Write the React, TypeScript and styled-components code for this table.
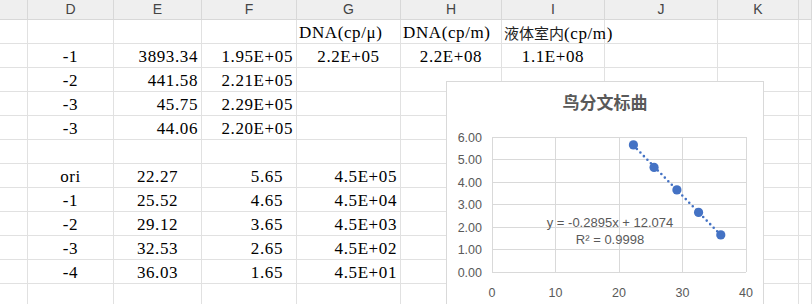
import React from "react";
import styled, { createGlobalStyle } from "styled-components";

type Align = "left" | "center" | "right";

interface CellData {
  text?: string;
  cjk?: string;
  align?: Align;
  pad?: number;
}

const GlobalStyle = createGlobalStyle`
  html, body {
    margin: 0;
    padding: 0;
    background: #fff;
  }
`;

const columns = ["", "D", "E", "F", "G", "H", "I", "J", "K", ""];
const widths = [28, 86, 88, 95, 104, 101, 103, 113, 81];

const c = (text: string, align: Align = "center", pad = 3): CellData => ({ text, align, pad });

// each row: cells for columns C..L (index 0..9)
const rows: CellData[][] = [
  [{}, {}, {}, {}, c("DNA(cp/μ)", "left", 2), c("DNA(cp/m)", "left", 2), { text: "(cp/m)", cjk: "液体室内", align: "left", pad: 2 }],
  [{}, c("-1"), c("3893.34", "right"), c("1.95E+05", "right"), c("2.2E+05"), c("2.2E+08"), c("1.1E+08")],
  [{}, c("-2"), c("441.58", "right"), c("2.21E+05", "right")],
  [{}, c("-3"), c("45.75", "right"), c("2.29E+05", "right")],
  [{}, c("-3"), c("44.06", "right"), c("2.20E+05", "right")],
  [],
  [{}, c("ori"), c("22.27"), c("5.65", "right", 13), c("4.5E+05", "right")],
  [{}, c("-1"), c("25.52"), c("4.65", "right", 13), c("4.5E+04", "right")],
  [{}, c("-2"), c("29.12"), c("3.65", "right", 13), c("4.5E+03", "right")],
  [{}, c("-3"), c("32.53"), c("2.65", "right", 13), c("4.5E+02", "right")],
  [{}, c("-4"), c("36.03"), c("1.65", "right", 13), c("4.5E+01", "right")],
  [],
];

const points = [
  [22.27, 5.65],
  [25.52, 4.65],
  [29.12, 3.65],
  [32.53, 2.65],
  [36.03, 1.65],
];

export default function App() {
  return (
    <Page>
      <GlobalStyle />
      <Sheet $cols={widths.map((w) => `${w}px`).join(" ") + " 1fr"}>
        {columns.map((name, i) => (
          <HeaderCell key={`h${i}`}>{name}</HeaderCell>
        ))}
        {rows.map((row, r) =>
          columns.map((_, i) => {
            const cell = row[i] || {};
            return (
              <Cell key={`${r}-${i}`} $align={cell.align || "left"} $pad={cell.pad ?? 3}>
                {cell.cjk && <Cjk>{cell.cjk}</Cjk>}
                {cell.text}
              </Cell>
            );
          })
        )}
      </Sheet>
      <Chart />
    </Page>
  );
}

// chart

const PL = 45;
const PR = 299;
const PT = 15;
const PB = 150;
const sx = (v: number) => PL + (v / 40) * (PR - PL);
const sy = (v: number) => PB - (v / 6) * (PB - PT);

const Chart: React.FC = () => {
  const x1 = 22.27;
  const x2 = 36.03;
  const fit = (x: number) => -0.2895 * x + 12.074;
  return (
    <ChartBox>
      <ChartTitle>鸟分文标曲</ChartTitle>
      <svg width={316} height={200}>
        {[0, 1, 2, 3, 4, 5, 6].map((v) => (
          <g key={`y${v}`}>
            <line x1={PL} x2={PR} y1={sy(v)} y2={sy(v)} stroke="#d9d9d9" strokeWidth={1} shapeRendering="crispEdges" />
            <AxisText x={35} y={sy(v) + 4.5} textAnchor="end">
              {v.toFixed(2)}
            </AxisText>
          </g>
        ))}
        {[0, 10, 20, 30, 40].map((v) => (
          <g key={`x${v}`}>
            <line x1={sx(v)} x2={sx(v)} y1={PT} y2={PB} stroke="#d9d9d9" strokeWidth={1} shapeRendering="crispEdges" />
            <AxisText x={sx(v)} y={174.5} textAnchor="middle">
              {v}
            </AxisText>
          </g>
        ))}
        <line
          x1={sx(x1)}
          y1={sy(fit(x1))}
          x2={sx(x2)}
          y2={sy(fit(x2))}
          stroke="#4472c4"
          strokeWidth={2.6}
          strokeDasharray="0 5"
          strokeLinecap="round"
        />
        {points.map(([x, y]) => (
          <circle key={x} cx={sx(x)} cy={sy(y)} r={4.6} fill="#4472c4" />
        ))}
        <EqText x={163} y={105} textAnchor="middle">
          y = -0.2895x + 12.074
        </EqText>
        <EqText x={163} y={122} textAnchor="middle">
          R² = 0.9998
        </EqText>
      </svg>
    </ChartBox>
  );
};

const Page = styled.div`
  position: relative;
  width: 812px;
  height: 304px;
  overflow: hidden;
  background: #fff;
`;

const Sheet = styled.div<{ $cols: string }>`
  display: grid;
  grid-template-columns: ${(p) => p.$cols};
  grid-template-rows: 20px;
  grid-auto-rows: 24px;
`;

const HeaderCell = styled.div`
  box-sizing: border-box;
  background: #efefef;
  border-right: 1px solid #d8d8d8;
  border-bottom: 1px solid #d8d8d8;
  color: #444;
  font-family: "Liberation Sans", Arial, sans-serif;
  font-size: 14px;
  line-height: 18px;
  text-align: center;
`;

const Cell = styled.div<{ $align: Align; $pad: number }>`
  box-sizing: border-box;
  border-right: 1px solid #e1e1e1;
  border-bottom: 1px solid #e1e1e1;
  padding-top: 3px;
  padding-left: ${(p) => (p.$align === "left" ? p.$pad : 0)}px;
  padding-right: ${(p) => (p.$align === "right" ? p.$pad : 0)}px;
  font-family: "Liberation Serif", "Noto Sans CJK SC", serif;
  font-size: 17px;
  line-height: 20px;
  letter-spacing: 0.6px;
  color: #000;
  text-align: ${(p) => p.$align};
  white-space: nowrap;
  overflow: visible;
`;

const Cjk = styled.span`
  font-family: "Noto Sans CJK SC", sans-serif;
  font-size: 15px;
  letter-spacing: 0;
  color: #222;
`;

const ChartBox = styled.div`
  position: absolute;
  left: 446px;
  top: 81px;
  width: 318px;
  height: 240px;
  box-sizing: border-box;
  border: 1px solid #d9d9d9;
  background: #fff;
  z-index: 2;
`;

const ChartTitle = styled.div`
  height: 40px;
  line-height: 40px;
  text-align: center;
  font-family: "Noto Sans CJK SC", sans-serif;
  font-weight: 700;
  font-size: 17px;
  color: #595959;
`;

const AxisText = styled.text`
  font-family: "Liberation Sans", Arial, sans-serif;
  font-size: 12.5px;
  fill: #595959;
`;

const EqText = styled.text`
  font-family: "Liberation Sans", Arial, sans-serif;
  font-size: 13px;
  fill: #595959;
`;
